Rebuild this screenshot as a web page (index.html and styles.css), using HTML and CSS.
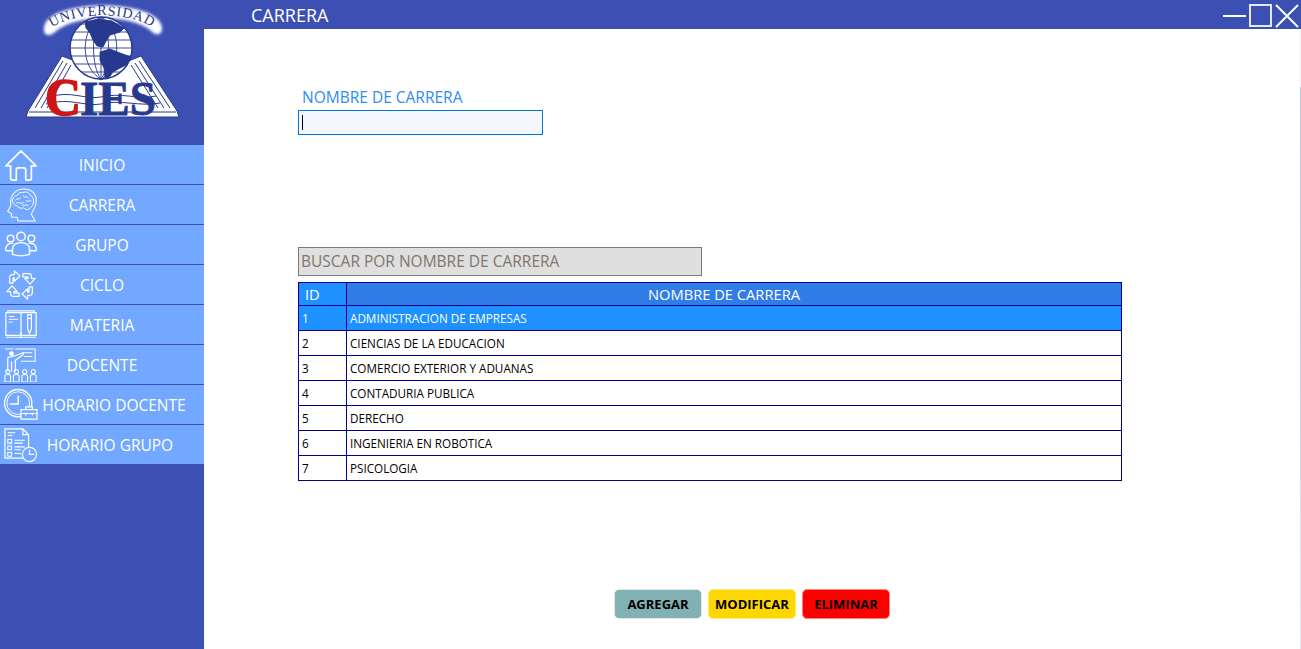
FILE: index.html
```html
<!DOCTYPE html>
<html lang="es">
  <head>
    <meta charset="UTF-8" />
    <meta name="viewport" content="width=device-width, initial-scale=1.0" />
    <title>Carrera</title>
    <link rel="stylesheet" href="styles.css">
  </head>
  <body>
    <div class="app">
      <aside class="sidebar">
        <div class="logo">
          <svg width="204" height="145" viewBox="0 0 204 145">
            <defs>
              <filter id="glow" x="-20%" y="-40%" width="140%" height="180%">
                <feGaussianBlur stdDeviation="1.8" />
              </filter>
              <clipPath id="globe-clip"><circle cx="101" cy="48" r="31" /></clipPath>
              <path id="arc" d="M47 32 C65 10 140 10 157 32" />
            </defs>
            <!-- cinta de arriba -->
            <path d="M44 28 C46 -2 160 -2 162 28 C162 36 155 36 150 30 C130 14 75 14 55 32 C50 37 43 36 44 28 Z" fill="#fff" filter="url(#glow)" />
            <text class="logo-arc" fill="#27388f"><textPath href="#arc" startOffset="50%" text-anchor="middle">UNIVERSIDAD</textPath></text>
            <!-- libro -->
            <path d="M62 56 L28 111 L26 117 L179 117 L177 111 L141 56 L126 62 L101 80 L78 62 Z" fill="#fff" stroke="#27388f" stroke-width="1" />
            <path d="M63 61 L35 108 M67 63 L41 108 M71 65 L47 108 M139 61 L170 108 M135 63 L164 108 M131 65 L158 108" stroke="#27388f" stroke-width="1" fill="none" />
            <path d="M29 112 H176" stroke="#27388f" stroke-width="1" />
            <path d="M50 97 C70 90 85 100 101 97 C120 92 140 100 156 96 M46 104 C70 97 85 107 101 104 C120 99 140 107 160 103" stroke="#27388f" stroke-width="1" fill="none" />
            <!-- globo -->
            <circle cx="101" cy="48" r="31" fill="#fff" stroke="#27388f" stroke-width="1.5" />
            <g clip-path="url(#globe-clip)" stroke="#27388f" stroke-width="0.9" fill="none">
              <path d="M70 24 H132 M70 32 H132 M70 40 H132 M70 48 H132 M70 56 H132 M70 64 H132 M70 72 H132" />
              <path d="M101 17 V79 M101 17 C91 30 91 66 101 79 M101 17 C111 30 111 66 101 79 M101 17 C80 28 80 68 101 79 M101 17 C122 28 122 68 101 79" />
              <path d="M85 22 L98 19 L112 21 L124 28 L120 32 L110 35 L106 41 L103 47 L97 46 L93 40 L90 33 L86 28 Z" fill="#27388f" />
              <path d="M100 52 L110 49 L120 53 L131 57 L128 64 L120 68 L113 72 L108 79 L105 78 L104 68 L100 60 Z" fill="#27388f" />
            </g>
            <text class="logo-word logo-c" x="45" y="115" textLength="36" lengthAdjust="spacingAndGlyphs">C</text>
            <text class="logo-word logo-ies" x="80" y="115" textLength="76" lengthAdjust="spacingAndGlyphs">IES</text>
          </svg>
        </div>
        <nav class="menu">
          <a class="menu-item">
            <svg class="menu-icon" viewBox="0 0 36 36"><path d="M2 19 L18 3 L34 19 L29 19 V32 Q29 34 27 34 H23 V23 Q23 21 21 21 H15 Q13 21 13 23 V34 H9 Q7 34 7 32 V19 Z" stroke-linejoin="round" stroke-width="1.8" /></svg>
            <span>INICIO</span>
          </a>
          <a class="menu-item">
            <svg class="menu-icon" viewBox="0 0 36 36"><path d="M7 15 C7 6 14 1 21 1 C30 1 35 7 34 15 C34 21 30 24 29 28 L33 35 H15 L14 31 H9 Q7 31 8 27 L4 25 L7 19 Z" stroke-width="1.1" /><path d="M9 13 C10 9 12 8 14 8 C15 5 18 4 20 5 C23 3 27 5 28 8 C31 9 32 13 31 16 C31 19 28 20 27 22 C24 24 22 22 21 21 C18 22 15 21 14 19 C11 19 9 16 9 13 Z" stroke-width="1" /><path d="M12 13 C14 10 16 13 18 10 M20 8 C22 11 25 8 26 11 M13 16 C16 14 18 18 21 15 M23 14 C25 13 27 15 29 13 M19 18 C22 19 24 17 26 19" stroke-width="1" /></svg>
            <span>CARRERA</span>
          </a>
          <a class="menu-item">
            <svg class="menu-icon" viewBox="0 0 36 36"><circle cx="18" cy="9" r="4.5" /><circle cx="7" cy="11" r="3.5" /><circle cx="29" cy="11" r="3.5" /><path d="M9 28 V22 C9 18 13 15.500 18 15.500 C23 15.500 27 18 27 22 V28 Q18 31 9 28 Z M9 24 H3 Q1 24 2 21 C3 17 5 16 10 16 M27 24 H33 Q35 24 34 21 C33 17 31 16 26 16" stroke-linejoin="round" /></svg>
            <span>GRUPO</span>
          </a>
          <a class="menu-item">
            <svg class="menu-icon" viewBox="0 0 36 36"><g stroke-linejoin="round" stroke-width="1.3"><path id="ciclo-arrow" d="M6 16 V10 Q6 7 9 7 H11 V3 L17 8.500 L11 14 V10.500 H9.500 V16 Z" /><use href="#ciclo-arrow" transform="rotate(90 18 18)" /><use href="#ciclo-arrow" transform="rotate(180 18 18)" /><use href="#ciclo-arrow" transform="rotate(270 18 18)" /></g></svg>
            <span>CICLO</span>
          </a>
          <a class="menu-item">
            <svg class="menu-icon" viewBox="0 0 36 36"><path d="M2 5 H18 V29 H2 Z M18 5 H34 V29 H18 Z" stroke-width="1.3" /><path d="M4 5 V3 H32 V5 M18 26 V32 M2 31 H34" stroke-width="1.2" /><path d="M5 9 H11 M5 12 H15 M5 15 H9" stroke-width="1" /><path d="M25 7 H29 V22 L27 27 L25 22 Z M25 11 H29" stroke-width="1.2" /></svg>
            <span>MATERIA</span>
          </a>
          <a class="menu-item">
            <svg class="menu-icon" viewBox="0 0 36 36"><path d="M15 1 H33 V14 H18 M20 5 H30 M21 9 H30 M12 1 H15" stroke-width="1.1" /><path d="M1 1 H10" stroke-width="1" /><circle cx="8" cy="6" r="2.500" fill="#fff" stroke="none" /><path d="M4 10 L10 9 L20 5 L20.500 7 L12 13 V25 M4 10 V25 M8 14 V25" stroke-width="1.300" /><path d="M1 36 V30 Q1 28 4 28 Q7 28 7 30 V36 Z M10 36 V30 Q10 28 13 28 Q16 28 16 30 V36 Z M19 36 V30 Q19 28 22 28 Q25 28 25 30 V36 Z M28 36 V30 Q28 28 31 28 Q34 28 34 30 V36 Z" stroke-width="1.100" /><circle cx="4" cy="25" r="2.200" stroke-width="1.100" /><circle cx="13" cy="25" r="2.200" stroke-width="1.100" /><circle cx="22" cy="25" r="2.200" stroke-width="1.100" /><circle cx="31" cy="25" r="2.200" stroke-width="1.100" /></svg>
            <span>DOCENTE</span>
          </a>
          <a class="menu-item item-horario-docente">
            <svg class="menu-icon" viewBox="0 0 36 36"><circle cx="15" cy="16" r="14.500" /><circle cx="15" cy="16" r="12" stroke-width="1" /><path d="M15 8 V17 H6" stroke-width="1.500" /><path d="M18 23 H35 V33 H18 Z M23 23 V20 H30 V23 M18 27 H35 M23 26 V29 M30 26 V29" fill="#72a8ff" stroke-width="1.300" /></svg>
            <span>HORARIO DOCENTE</span>
          </a>
          <a class="menu-item item-horario-grupo">
            <svg class="menu-icon" viewBox="0 0 36 36"><path d="M1 1 H20 L26 7 V32 H1 Z M20 1 V7 H26" stroke-width="1.300" /><path d="M4 5 H12 M4 8 H9 M4 12 H8 V16 H4 Z M4 19 H8 V23 H4 Z M4 26 H8 V30 H4 Z M11 13 H22 M11 16 H20 M11 20 H22 M11 23 H18 M11 27 H18" stroke-width="1.100" /><circle cx="27" cy="28" r="7.500" fill="#72a8ff" stroke-width="1.300" /><path d="M27 23 V28 H32" stroke-width="1.300" /></svg>
            <span>HORARIO GRUPO</span>
          </a>
        </nav>
      </aside>

      <div class="main">
        <header class="topbar">
          <span class="topbar-title">CARRERA</span>
          <div class="window-btns">
            <svg width="24" height="24" viewBox="0 0 24 24"><path d="M0 12 H23" stroke="#fff" stroke-width="2" /></svg>
            <svg width="24" height="24" viewBox="0 0 24 24"><rect x="1" y="1" width="21" height="21" fill="none" stroke="#e6e9f8" stroke-width="2" /></svg>
            <svg width="24" height="24" viewBox="0 0 24 24"><path d="M1 1 L23 23 M23 1 L1 23" stroke="#fff" stroke-width="2" /></svg>
          </div>
        </header>

        <section class="content">
          <label class="field-label" for="nombre">NOMBRE DE CARRERA</label>
          <div class="name-box" id="nombre"><span class="caret"></span></div>

          <div class="search-box">BUSCAR POR NOMBRE DE CARRERA</div>

          <table class="grid">
            <thead>
              <tr><th class="col-id">ID</th><th>NOMBRE DE CARRERA</th></tr>
            </thead>
            <tbody>
              <tr class="selected"><td>1</td><td>ADMINISTRACION DE EMPRESAS</td></tr>
              <tr><td>2</td><td>CIENCIAS DE LA EDUCACION</td></tr>
              <tr><td>3</td><td>COMERCIO EXTERIOR Y ADUANAS</td></tr>
              <tr><td>4</td><td>CONTADURIA PUBLICA</td></tr>
              <tr><td>5</td><td>DERECHO</td></tr>
              <tr><td>6</td><td>INGENIERIA EN ROBOTICA</td></tr>
              <tr><td>7</td><td>PSICOLOGIA</td></tr>
            </tbody>
          </table>

          <div class="actions">
            <button class="btn btn-add">AGREGAR</button>
            <button class="btn btn-edit">MODIFICAR</button>
            <button class="btn btn-del">ELIMINAR</button>
          </div>
        </section>
      </div>
    </div>
  </body>
</html>
```

FILE: styles.css
```css
* {
  box-sizing: border-box;
}
html,
body {
  margin: 0;
  height: 100%;
  overflow: hidden;
}
body {
  font-family: 'Open Sans', 'Noto Sans', sans-serif;
  background-color: #fff;
}
.app {
  display: flex;
  height: 649px;
}
.sidebar {
  width: 204px;
  flex-shrink: 0;
  background-color: #3c50b4;
}
.logo {
  height: 145px;
}
.logo svg {
  display: block;
}
.logo-arc {
  font-family: 'Liberation Serif', serif;
  font-size: 14px;
  letter-spacing: 0.8px;
}
.logo-word {
  font-family: 'Liberation Serif', serif;
  font-weight: bold;
}
.logo-c {
  font-size: 52px;
  fill: #cf1518;
  stroke: #cf1518;
  stroke-width: 1.5px;
}
.logo-ies {
  font-size: 48px;
  fill: #27388f;
  stroke: #27388f;
  stroke-width: 0.8px;
}
.menu-item {
  display: flex;
  align-items: center;
  height: 40px;
  padding-left: 4px;
  background-color: #72a8ff;
  border-bottom: 1px solid #3c50b4;
  color: #fff;
  font-size: 15.5px;
}
.menu-item:last-child {
  height: 39px;
  border-bottom: none;
}
/* el texto se centra en todo el ancho del menu, no en lo que deja el icono */
.menu-item span {
  flex: 1;
  margin-left: -38px;
  text-align: center;
  white-space: nowrap;
}
.item-horario-docente span {
  margin-left: -14px;
}
.item-horario-grupo span {
  margin-left: -22px;
}
.menu-icon {
  width: 34px;
  height: 34px;
  flex-shrink: 0;
  fill: none;
  stroke: #fff;
  stroke-width: 1.5;
}
.main {
  flex: 1;
  display: flex;
  flex-direction: column;
  min-width: 0;
}
.topbar {
  display: flex;
  align-items: center;
  justify-content: space-between;
  height: 29px;
  flex-shrink: 0;
  background-color: #3c50b4;
  color: #fff;
  font-size: 18px;
  padding-left: 47px;
}
.window-btns {
  display: flex;
  height: 29px;
  padding-top: 4px;
  gap: 2px;
  margin-right: 2px;
}
.content {
  flex: 1;
  padding: 58px 0 0 94px;
  border-right: 1px solid;
  border-image: linear-gradient(to bottom, #f0f2f8 59px, #b9c3e3 59px, #dfe6f5) 1;
}
.field-label {
  display: block;
  padding-left: 4px;
  color: #2f8bf5;
  font-size: 15.5px;
  line-height: 20px;
}
.name-box {
  width: 245px;
  height: 25px;
  margin-top: 3px;
  padding: 4px 3px;
  background-color: #f3f6fc;
  border: 1px solid #0078d7;
}
.caret {
  display: block;
  width: 1px;
  height: 15px;
  background-color: #000;
}
.search-box {
  width: 404px;
  height: 29px;
  margin-top: 112px;
  padding-left: 2px;
  background-color: #dfdfdf;
  border: 1px solid #7a7a7a;
  color: #80766c;
  font-size: 15.5px;
  line-height: 27px;
}
.grid {
  width: 824px;
  margin-top: 6px;
  border-collapse: collapse;
  table-layout: fixed;
  font-size: 11.7px;
  color: #000;
}
.grid th,
.grid td {
  border: 1px solid #00008b;
  padding: 0 3px;
  text-align: left;
  white-space: nowrap;
}
.grid th {
  height: 23px;
  padding-right: 23px;
  background-color: #317de8;
  color: #fff;
  font-size: 14.7px;
  font-weight: normal;
  text-align: center;
}
.grid th.col-id {
  width: 48px;
  background-color: #1e90ff;
  text-align: left;
  padding-left: 6px;
  padding-right: 0;
}
.grid td {
  height: 25px;
}
.grid .selected td {
  background-color: #1e90ff;
  color: #fff;
}
.actions {
  display: flex;
  gap: 6px;
  margin-top: 108px;
  margin-left: 316px;
}
.btn {
  width: 88px;
  height: 30px;
  padding: 0;
  border: 1px solid #e4eaea;
  border-radius: 5px;
  color: #000;
  font-family: inherit;
  font-size: 13px;
  font-weight: bold;
}
.btn-add {
  background-color: #82b1b3;
}
.btn-edit {
  background-color: #ffd700;
  border-color: #ffe97a;
}
.btn-del {
  background-color: #f00;
  border-color: #ff8080;
}
```
